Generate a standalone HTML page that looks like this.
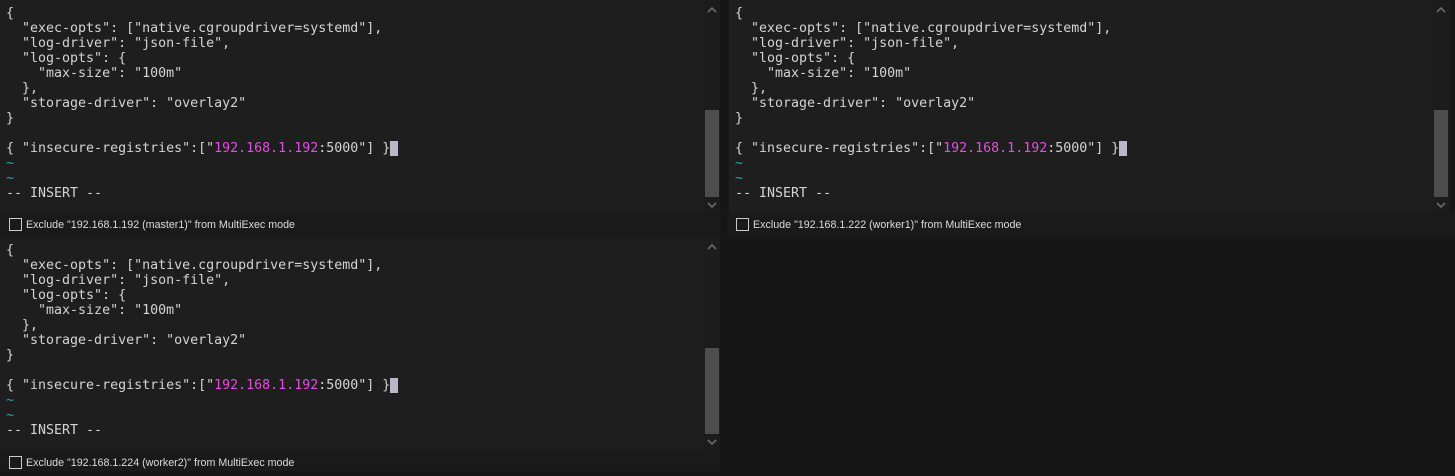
<!DOCTYPE html>
<html><head><style>
body{margin:0;width:1455px;height:471px;background:#161616;position:relative;overflow:hidden;font-family:"DejaVu Sans Mono","Liberation Mono",monospace;}
.term{position:absolute;background:#1e1e1e;color:#d4d4d4;font-size:13.3px;line-height:15px;white-space:pre;padding:6px 0 0 6px;box-sizing:border-box;}
.m{color:#e24de2}.t{color:#2aa7b8}.c{background:#b8b8c8;color:#b8b8c8}
.sb{position:absolute;width:16px;background:#1c1c1c;}
.th{position:absolute;left:1px;width:14px;background:#4d4d4d;}
.ar{position:absolute;left:3px;width:10px;height:6px;}
.ft{position:absolute;height:24px;background:#1a1a1a;color:#dcdcdc;font-family:"Liberation Sans",sans-serif;font-size:10.7px;line-height:25px;}
.cb{display:inline-block;width:11px;height:11px;border:1px solid #ccc;vertical-align:-3px;margin:0 4px 0 9px;}
</style></head><body>
<div class="term" style="left:0;top:0;width:704px;height:213px">{
  "exec-opts": ["native.cgroupdriver=systemd"],
  "log-driver": "json-file",
  "log-opts": {
    "max-size": "100m"
  },
  "storage-driver": "overlay2"
}

{ "insecure-registries":["<span class="m">192.168.1.192</span>:5000"] }<span class="c">_</span>
<span class="t">~</span>
<span class="t">~</span>
-- INSERT --</div>
<div class="sb" style="left:704px;top:0;height:213px"><svg class="ar" style="top:7px" viewBox="0 0 10 6"><polyline points="1,5 5,1 9,5" fill="none" stroke="#6a6a6a" stroke-width="1.6"/></svg><div class="th" style="top:110px;height:87px"></div><svg class="ar" style="top:202px" viewBox="0 0 10 6"><polyline points="1,1 5,5 9,1" fill="none" stroke="#6a6a6a" stroke-width="1.6"/></svg></div>
<div class="ft" style="left:0;top:213px;width:720px"><span class="cb"></span>Exclude "192.168.1.192 (master1)" from MultiExec mode</div>

<div class="term" style="left:729px;top:0;width:704px;height:213px">{
  "exec-opts": ["native.cgroupdriver=systemd"],
  "log-driver": "json-file",
  "log-opts": {
    "max-size": "100m"
  },
  "storage-driver": "overlay2"
}

{ "insecure-registries":["<span class="m">192.168.1.192</span>:5000"] }<span class="c">_</span>
<span class="t">~</span>
<span class="t">~</span>
-- INSERT --</div>
<div class="sb" style="left:1433px;top:0;height:213px"><svg class="ar" style="top:7px" viewBox="0 0 10 6"><polyline points="1,5 5,1 9,5" fill="none" stroke="#6a6a6a" stroke-width="1.6"/></svg><div class="th" style="top:110px;height:87px"></div><svg class="ar" style="top:202px" viewBox="0 0 10 6"><polyline points="1,1 5,5 9,1" fill="none" stroke="#6a6a6a" stroke-width="1.6"/></svg></div>
<div class="ft" style="left:727px;top:213px;width:728px"><span class="cb"></span>Exclude "192.168.1.222 (worker1)" from MultiExec mode</div>

<div class="term" style="left:0;top:237px;width:704px;height:213px">{
  "exec-opts": ["native.cgroupdriver=systemd"],
  "log-driver": "json-file",
  "log-opts": {
    "max-size": "100m"
  },
  "storage-driver": "overlay2"
}

{ "insecure-registries":["<span class="m">192.168.1.192</span>:5000"] }<span class="c">_</span>
<span class="t">~</span>
<span class="t">~</span>
-- INSERT --</div>
<div class="sb" style="left:704px;top:237px;height:213px"><svg class="ar" style="top:7px" viewBox="0 0 10 6"><polyline points="1,5 5,1 9,5" fill="none" stroke="#6a6a6a" stroke-width="1.6"/></svg><div class="th" style="top:111px;height:86px"></div><svg class="ar" style="top:202px" viewBox="0 0 10 6"><polyline points="1,1 5,5 9,1" fill="none" stroke="#6a6a6a" stroke-width="1.6"/></svg></div>
<div class="ft" style="left:0;top:450px;width:720px;height:21px;line-height:26px"><span class="cb"></span>Exclude "192.168.1.224 (worker2)" from MultiExec mode</div>
</body></html>
